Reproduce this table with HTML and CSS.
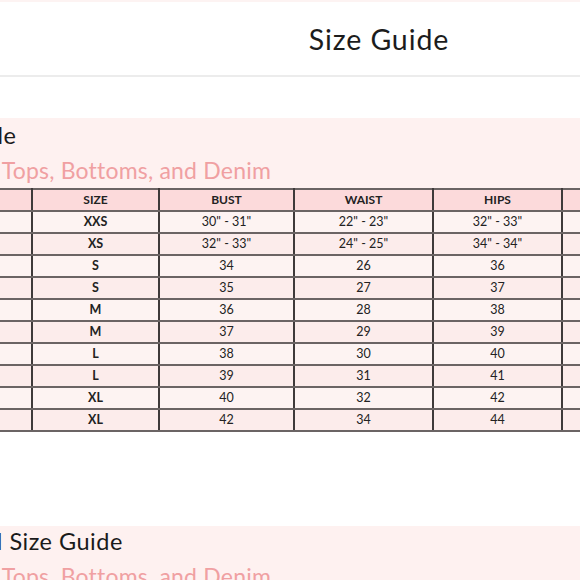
FILE: index.html
```html
<!DOCTYPE html>
<html lang="en">
<head>
<meta charset="utf-8">
<title>Size Guide</title>
<link rel="stylesheet" href="styles.css">
</head>
<body>
<div class="page">
  <header class="topbar">
    <h1 class="title">Size Guide</h1>
  </header>

  <section class="guide guide-first">
    <div class="guide-text">
      <h2 class="guide-heading heading-one">Size Table</h2>
      <h3 class="guide-sub">Juniors Tops, Bottoms, and Denim</h3>
    </div>
    <table class="chart">
      <colgroup>
        <col class="c1"><col class="c2"><col class="c3"><col class="c4"><col class="c5"><col class="c6">
      </colgroup>
      <thead>
        <tr><th>US SIZE</th><th>SIZE</th><th>BUST</th><th>WAIST</th><th>HIPS</th><th>INSEAM</th></tr>
      </thead>
      <tbody>
        <tr class="odd"><td>00</td><td class="sz">XXS</td><td>30" - 31"</td><td>22" - 23"</td><td>32" - 33"</td><td>30"</td></tr>
        <tr class="even"><td>0</td><td class="sz">XS</td><td>32" - 33"</td><td>24" - 25"</td><td>34" - 34"</td><td>30"</td></tr>
        <tr class="odd"><td>1</td><td class="sz">S</td><td>34</td><td>26</td><td>36</td><td>30"</td></tr>
        <tr class="even"><td>3</td><td class="sz">S</td><td>35</td><td>27</td><td>37</td><td>30"</td></tr>
        <tr class="odd"><td>5</td><td class="sz">M</td><td>36</td><td>28</td><td>38</td><td>31"</td></tr>
        <tr class="even"><td>7</td><td class="sz">M</td><td>37</td><td>29</td><td>39</td><td>31"</td></tr>
        <tr class="odd"><td>9</td><td class="sz">L</td><td>38</td><td>30</td><td>40</td><td>31"</td></tr>
        <tr class="even"><td>11</td><td class="sz">L</td><td>39</td><td>31</td><td>41</td><td>31"</td></tr>
        <tr class="odd"><td>13</td><td class="sz">XL</td><td>40</td><td>32</td><td>42</td><td>32"</td></tr>
        <tr class="even"><td>15</td><td class="sz">XL</td><td>42</td><td>34</td><td>44</td><td>32"</td></tr>
      </tbody>
    </table>
  </section>

  <section class="guide guide-second">
    <div class="guide-text">
      <h2 class="guide-heading heading-two">Regional Size Guide</h2>
      <h3 class="guide-sub">Juniors Tops, Bottoms, and Denim</h3>
    </div>
  </section>
</div>
</body>
</html>
```

FILE: styles.css
```css
html, body {
  margin: 0;
  padding: 0;
  background: #ffffff;
  overflow: hidden;
}

body {
  font-family: "Lato", "Open Sans", sans-serif;
  color: #1f1f1f;
}

.page {
  width: 1196px;
  margin-left: -220px;
}

.topbar {
  height: 73px;
  border-top: 2px solid #fdf3f2;
  border-bottom: 2px solid #ececec;
  display: flex;
  align-items: center;
  justify-content: center;
}

.title {
  margin: 0;
  font-size: 28.5px;
  font-weight: 400;
  color: #1c1c1c;
  letter-spacing: 0.9px;
  padding-left: 2px;
}

.guide {
  background: #fef1f0;
  padding-left: 123px;
}

.guide-first {
  margin-top: 41px;
  padding-top: 4px;
}

.guide-second {
  margin-top: 94px;
  padding-top: 2px;
  height: 62px;
}

.guide-text {
  padding-left: 20px;
}

.heading-one {
  text-indent: -12px;
}

.heading-two {
  text-indent: -12px;
}

.guide-heading {
  margin: 0;
  font-size: 23.5px;
  font-weight: 400;
  line-height: 26px;
  letter-spacing: 0.5px;
  color: #1a1a1a;
}

.guide-sub {
  margin: 7px 0 0;
  font-size: 23px;
  font-weight: 400;
  line-height: 30px;
  letter-spacing: 0.2px;
  color: #f0a0a2;
}

.chart {
  margin-top: 3px;
  border-collapse: collapse;
  table-layout: fixed;
  width: 787px;
}

.c1 { width: 128px; }
.c2 { width: 127px; }
.c3 { width: 135px; }
.c4 { width: 139px; }
.c5 { width: 129px; }
.c6 { width: 129px; }

.chart th,
.chart td {
  height: 20px;
  padding: 0;
  text-align: center;
  border-top: 2px solid #6b6464;
  border-bottom: 2px solid #6b6464;
  border-left: 2px solid #3f3a3a;
  border-right: 2px solid #3f3a3a;
  line-height: 20px;
  font-size: 12.5px;
  color: #222222;
}

.chart th {
  background: #fcdadb;
  font-weight: 700;
  font-size: 12px;
}

.chart .odd td {
  background: #fdf3f2;
}

.chart .even td {
  background: #fceceb;
}

.chart td.sz {
  font-weight: 700;
}
```
